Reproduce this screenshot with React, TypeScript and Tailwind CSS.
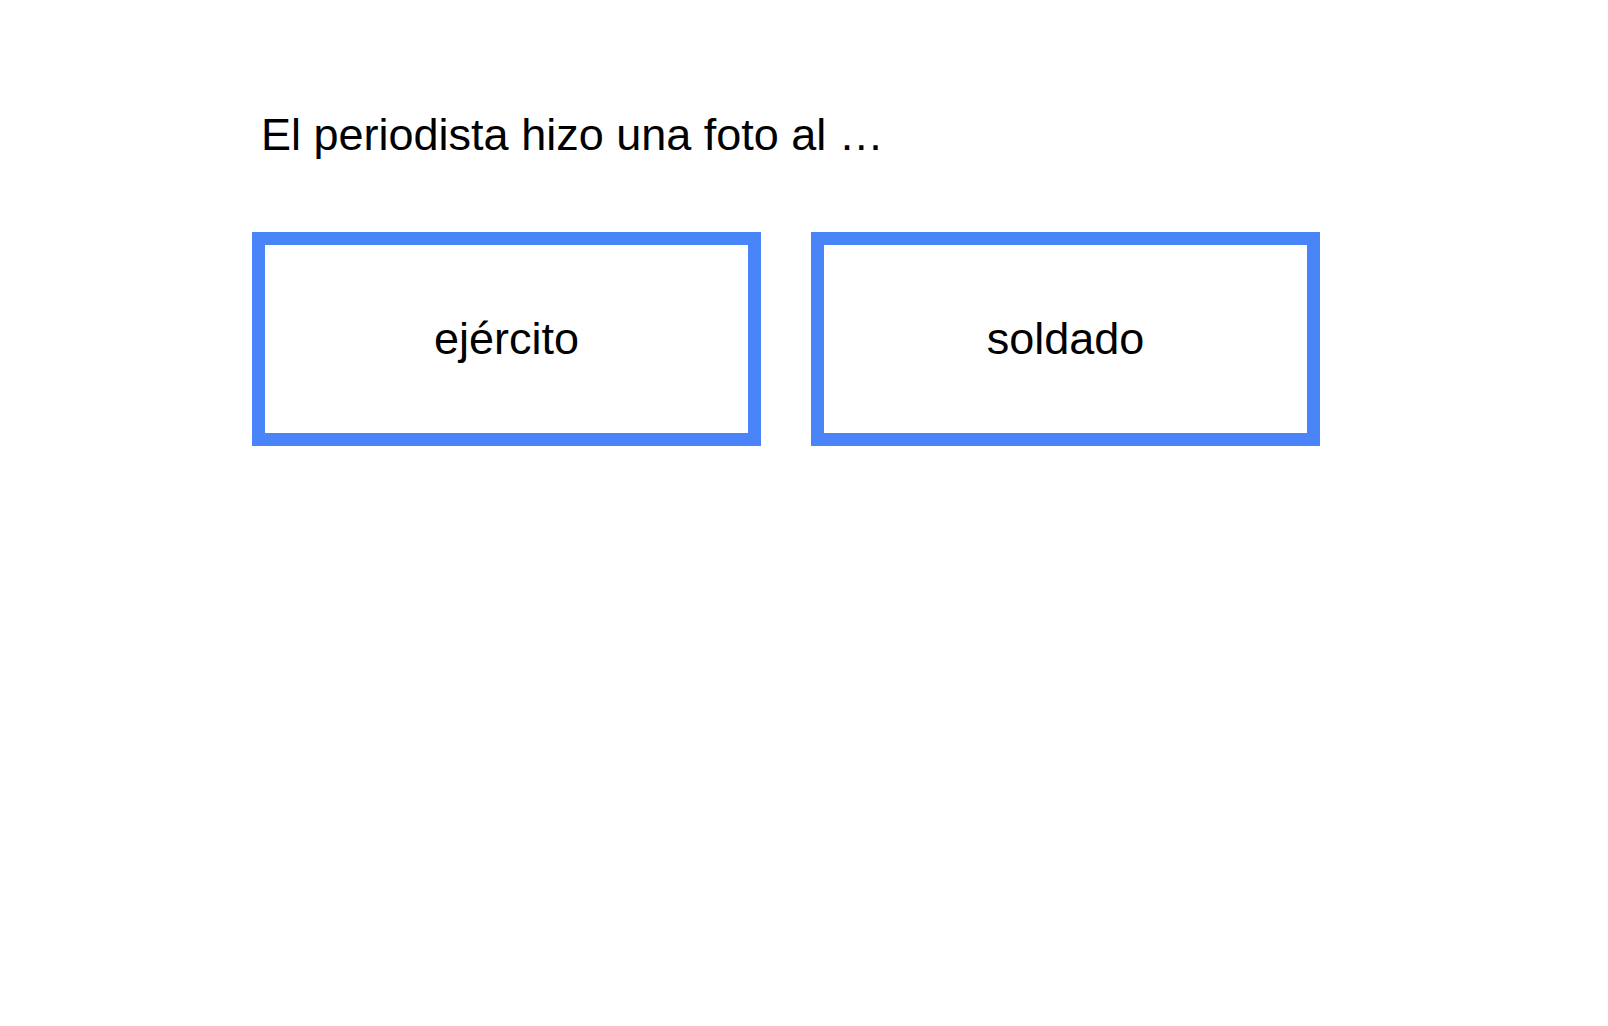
const choices = ['ejército', 'soldado'];

export default function App() {
  return (
    <div className="min-h-screen w-full bg-white text-black" style={{ fontFamily: '"Liberation Sans", Arial, sans-serif' }}>
      <div className="pt-[109px] pl-[252px]">
        <h1 className="ml-[9px] text-[45px] leading-[52px] font-normal">El periodista hizo una foto al …</h1>
        <div className="mt-[71px] flex gap-[50px]">
          {choices.map((word) => (
            <div
              key={word}
              className="flex h-[214px] w-[509px] items-center justify-center border-[13px] border-[#4985f8] text-[45px] leading-[52px]"
            >
              {word}
            </div>
          ))}
        </div>
      </div>
    </div>
  );
}
